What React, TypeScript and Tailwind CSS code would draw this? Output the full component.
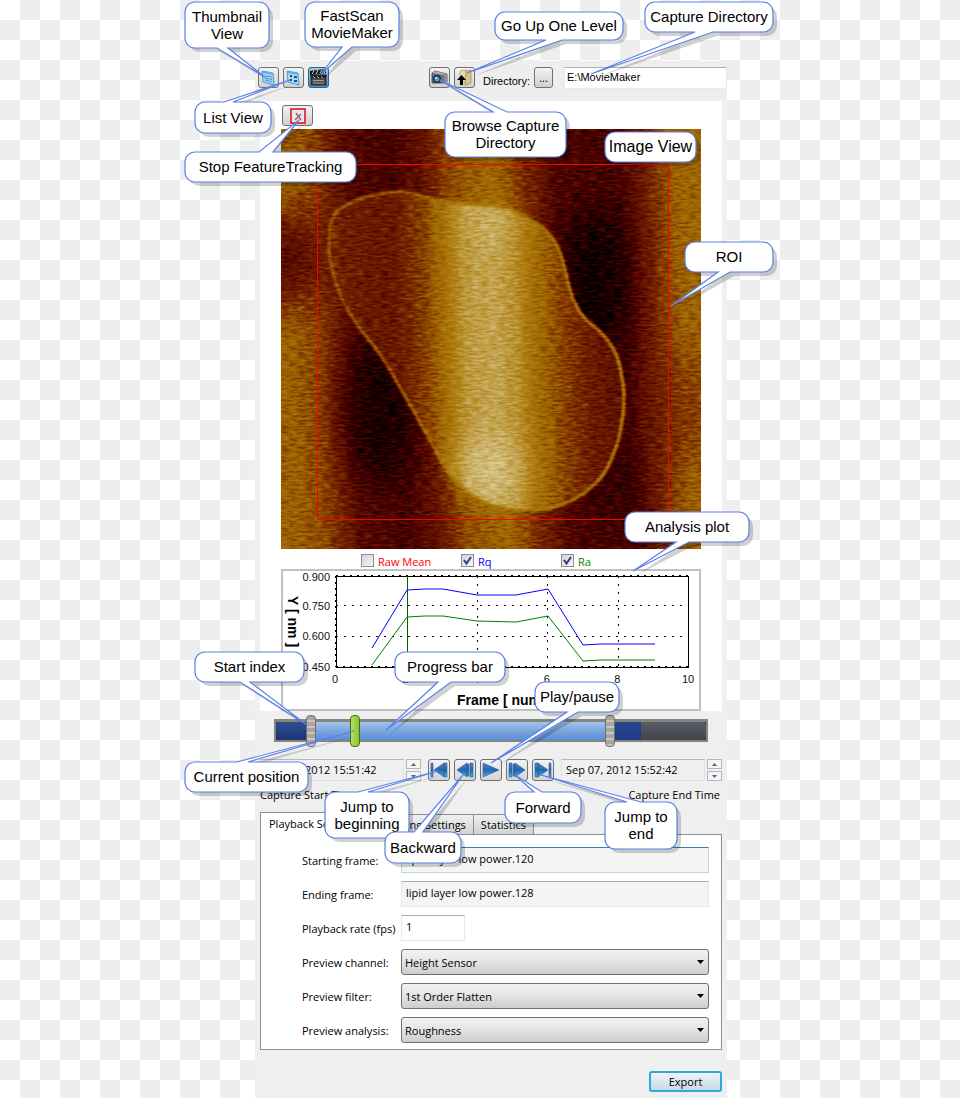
import React from "react";

type Point = [number, number];

type Callout = {
  lines: string[];
  x: number;
  y: number;
  w: number;
  h: number;
  large?: boolean;
  tail?: { side: "top" | "bottom"; from: number; to: number; tip: Point };
};

const callouts: Callout[] = [
  { lines: ["Thumbnail", "View"], x: 185, y: 2, w: 84, h: 46, tail: { side: "bottom", from: 217, to: 228, tip: [265, 77] } },
  { lines: ["FastScan", "MovieMaker"], x: 305, y: 2, w: 94, h: 45, tail: { side: "bottom", from: 342, to: 352, tip: [321, 74] } },
  { lines: ["Go Up One Level"], x: 495, y: 12, w: 128, h: 28, tail: { side: "bottom", from: 546, to: 562, tip: [467, 73] } },
  { lines: ["Capture Directory"], x: 645, y: 2, w: 128, h: 30, tail: { side: "bottom", from: 695, to: 713, tip: [591, 74] } },
  { lines: ["List View"], x: 195, y: 102, w: 76, h: 31, tail: { side: "top", from: 224, to: 233, tip: [290, 80] } },
  { lines: ["Browse Capture", "Directory"], x: 445, y: 112, w: 121, h: 45, tail: { side: "top", from: 493, to: 507, tip: [440, 80] } },
  { lines: ["Image View"], x: 605, y: 132, w: 91, h: 30, large: true },
  { lines: ["Stop FeatureTracking"], x: 185, y: 152, w: 171, h: 30, tail: { side: "top", from: 259, to: 273, tip: [299, 120] } },
  { lines: ["ROI"], x: 685, y: 242, w: 88, h: 30, tail: { side: "bottom", from: 718, to: 730, tip: [671, 306] } },
  { lines: ["Analysis plot"], x: 625, y: 512, w: 124, h: 30, tail: { side: "bottom", from: 676, to: 689, tip: [633, 571] } },
  { lines: ["Start index"], x: 195, y: 652, w: 109, h: 30, tail: { side: "bottom", from: 240, to: 250, tip: [307, 725] } },
  { lines: ["Progress bar"], x: 395, y: 652, w: 110, h: 30, tail: { side: "bottom", from: 438, to: 451, tip: [386, 730] } },
  { lines: ["Play/pause"], x: 535, y: 682, w: 84, h: 30, tail: { side: "bottom", from: 567, to: 578, tip: [491, 763] } },
  { lines: ["Current position"], x: 185, y: 762, w: 123, h: 30, tail: { side: "top", from: 237, to: 248, tip: [354, 731] } },
  { lines: ["Jump to", "beginning"], x: 325, y: 792, w: 84, h: 46, tail: { side: "top", from: 358, to: 368, tip: [438, 771] } },
  { lines: ["Backward"], x: 385, y: 832, w: 76, h: 31, tail: { side: "top", from: 414, to: 423, tip: [463, 775] } },
  { lines: ["Forward"], x: 505, y: 792, w: 76, h: 31, tail: { side: "top", from: 534, to: 542, tip: [515, 775] } },
  { lines: ["Jump to", "end"], x: 605, y: 802, w: 72, h: 47, tail: { side: "top", from: 627, to: 641, tip: [541, 775] } },
];

const calloutPath = ({ x, y, w, h, tail }: Callout) => {
  const r = 10;
  const top =
    tail?.side === "top" ? `H${tail.from} L${tail.tip.join(" ")} L${tail.to} ${y}` : "";
  const bottom =
    tail?.side === "bottom"
      ? `H${tail.to} L${tail.tip.join(" ")} L${tail.from} ${y + h}`
      : "";
  return [
    `M${x + r} ${y}`,
    top,
    `H${x + w - r} a${r} ${r} 0 0 1 ${r} ${r}`,
    `V${y + h - r} a${r} ${r} 0 0 1 -${r} ${r}`,
    bottom,
    `H${x + r} a${r} ${r} 0 0 1 -${r} -${r}`,
    `V${y + r} a${r} ${r} 0 0 1 ${r} -${r} Z`,
  ].join(" ");
};

const Callouts: React.FC = () => (
  <svg
    viewBox="180 0 600 870"
    width="600"
    height="870"
    className="pointer-events-none absolute -left-[75px] top-0 z-10 max-w-none font-['Liberation_Sans',sans-serif]"
  >
    {callouts.map((item) => {
      const d = calloutPath(item);
      const middle = item.y + item.h / 2 + 5;
      return (
        <g key={item.lines.join(" ")}>
          <path d={d} transform="translate(4 4)" fill="#000" fillOpacity="0.18" />
          <path d={d} fill="#fff" stroke="#5c80e6" strokeWidth="1.2" />
          <text textAnchor="middle" className={item.large ? "text-[16px]" : "text-[15px]"}>
            {item.lines.map((line, i) => (
              <tspan
                key={line}
                x={item.x + item.w / 2}
                y={Math.round(middle + (i - (item.lines.length - 1) / 2) * 17)}
              >
                {line}
              </tspan>
            ))}
          </text>
        </g>
      );
    })}
  </svg>
);

const blob: Point[] = [
  [49, 88], [66, 74], [88, 67], [109, 63], [129, 63], [149, 70], [176, 74], [219, 77],
  [242, 86], [269, 103], [281, 126], [286, 148], [291, 168], [302, 189], [322, 204],
  [336, 224], [342, 250], [344, 274], [339, 308], [331, 330], [322, 348], [302, 366],
  [276, 379], [246, 382], [219, 379], [192, 368], [166, 344], [149, 311], [122, 264],
  [99, 224], [69, 188], [54, 154], [47, 124],
];

// Closed curve that bends at each point and passes through the midpoints
const smoothPath = (points: Point[]) => {
  const mid = (a: Point, b: Point) => `${(a[0] + b[0]) / 2} ${(a[1] + b[1]) / 2}`;
  const start = mid(points[points.length - 1], points[0]);
  const curves = points.map(
    (p, i) => `Q${p[0]} ${p[1]} ${mid(p, points[(i + 1) % points.length])}`
  );
  return `M${start} ${curves.join(" ")} Z`;
};

const HeightImage: React.FC = () => (
  <svg viewBox="0 0 420 420" className="block w-full">
    <defs>
      <linearGradient id="ground" gradientUnits="userSpaceOnUse" x1="0" y1="0" x2="420" y2="-18">
        <stop offset="0" stopColor="#6a6a6a" />
        <stop offset="0.07" stopColor="#5a5a5a" />
        <stop offset="0.15" stopColor="#2e2e2e" />
        <stop offset="0.25" stopColor="#222" />
        <stop offset="0.33" stopColor="#363636" />
        <stop offset="0.4" stopColor="#5e5e5e" />
        <stop offset="0.5" stopColor="#707070" />
        <stop offset="0.58" stopColor="#484848" />
        <stop offset="0.65" stopColor="#282828" />
        <stop offset="0.8" stopColor="#222" />
        <stop offset="0.87" stopColor="#484848" />
        <stop offset="0.93" stopColor="#6a6a6a" />
        <stop offset="1" stopColor="#707070" />
      </linearGradient>
      <linearGradient id="layer" gradientUnits="userSpaceOnUse" x1="40" x2="350" y1="0" y2="-8">
        <stop offset="0" stopColor="#4c4c4c" />
        <stop offset="0.1" stopColor="#404040" />
        <stop offset="0.22" stopColor="#3c3c3c" />
        <stop offset="0.32" stopColor="#585858" />
        <stop offset="0.39" stopColor="#7c7c7c" />
        <stop offset="0.45" stopColor="#a2a2a2" />
        <stop offset="0.54" stopColor="#acacac" />
        <stop offset="0.61" stopColor="#9c9c9c" />
        <stop offset="0.67" stopColor="#787878" />
        <stop offset="0.76" stopColor="#5a5a5a" />
        <stop offset="0.86" stopColor="#3d3d3d" />
        <stop offset="1" stopColor="#343434" />
      </linearGradient>
      <linearGradient id="rim">
        <stop offset="0" stopColor="#686868" />
        <stop offset="0.4" stopColor="#747474" />
        <stop offset="1" stopColor="#848484" />
      </linearGradient>
      <filter id="soft" x="-50%" y="-50%" width="200%" height="200%">
        <feGaussianBlur stdDeviation="18" />
      </filter>
      <filter id="edge">
        <feGaussianBlur stdDeviation="0.8" />
      </filter>
      <filter id="scan" x="0" y="0" width="100%" height="100%" colorInterpolationFilters="sRGB">
        <feTurbulence type="fractalNoise" baseFrequency="0.12 0.45" numOctaves="2" seed="4" />
        <feColorMatrix values="1 0 0 0 0  1 0 0 0 0  1 0 0 0 0  0 0 0 0 1" result="noise" />
        <feComposite in="SourceGraphic" in2="noise" operator="arithmetic" k2="1" k3="0.28" k4="-0.14" />
        <feColorMatrix values="1 0 0 0 0  0 1 0 0 0  0 0 1 0 0  0 0 0 0 1" />
        <feComponentTransfer>
          <feFuncR type="table" tableValues="0 0.29 0.46 0.62 0.7 0.79 0.9 1" />
          <feFuncG type="table" tableValues="0 0 0.14 0.4 0.52 0.69 0.86 1" />
          <feFuncB type="table" tableValues="0 0 0 0 0.1 0.4 0.68 1" />
        </feComponentTransfer>
      </filter>
    </defs>
    <g filter="url(#scan)">
      <rect width="420" height="420" fill="url(#ground)" />
      <g filter="url(#soft)">
        <ellipse cx="98" cy="280" rx="36" ry="80" fill="#000" fillOpacity="0.7" />
        <ellipse cx="312" cy="155" rx="32" ry="80" fill="#000" fillOpacity="0.85" />
        <ellipse cx="330" cy="360" rx="24" ry="40" fill="#000" fillOpacity="0.35" />
        <ellipse cx="5" cy="130" rx="34" ry="46" fill="#1c1c1c" fillOpacity="0.8" />
        <ellipse cx="405" cy="280" rx="34" ry="60" fill="#333" fillOpacity="0.4" />
      </g>
      <path
        d={smoothPath(blob)}
        fill="url(#layer)"
        stroke="url(#rim)"
        strokeWidth="3"
        filter="url(#edge)"
      />
      <g filter="url(#soft)">
        <ellipse cx="208" cy="340" rx="34" ry="26" fill="#eee" fillOpacity="0.45" />
        <ellipse cx="212" cy="92" rx="28" ry="12" fill="#eee" fillOpacity="0.3" />
      </g>
    </g>
    <path d="M36.5 35.5H387.5V390.5H36.5Z" fill="none" stroke="#f00" />
  </svg>
);

const rq = "89,77 124,19 142,18 160,18 194,24 233,24 265,18 300,74 318,73 372,73";
const ra = "89,94 124,46 142,45 160,45 194,50 233,51 265,45 300,90 318,89 372,89";

const AnalysisPlot: React.FC = () => (
  <div className="border-2 border-[#c0c0c0] bg-white">
    <svg
      viewBox="0 0 416 138"
      className="block w-full font-['Liberation_Sans',sans-serif] text-[11px]"
    >
      <g stroke="#000" strokeDasharray="2 6" fill="none" shapeRendering="crispEdges">
        <path d="M53 34.5H405M53 65.5H405M194.5 5V96M264.5 5V96M335.5 5V96" />
        <path d="M53 4.5H405M53 95.5H405" strokeDasharray="2 5" strokeWidth="2" />
        <path d="M52.5 5V96" strokeDasharray="2 4" strokeWidth="2" />
      </g>
      <rect x="53.5" y="5.5" width="352" height="91" fill="none" stroke="#000" />
      <path d="M124.5 5V96" stroke="#006000" />
      <polyline points={rq} fill="none" stroke="#00f" />
      <polyline points={ra} fill="none" stroke="#008000" />
      <g textAnchor="end" fill="#111">
        <text x="47" y="10">0.900</text>
        <text x="47" y="39">0.750</text>
        <text x="47" y="69">0.600</text>
        <text x="47" y="100">0.450</text>
      </g>
      <g textAnchor="middle" fill="#111">
        {[0, 2, 4, 6, 8, 10].map((n) => (
          <text key={n} x={52 + n * 35.3} y="112">
            {n}
          </text>
        ))}
      </g>
      <g className="text-[14px] font-bold">
        <text x="174" y="134">Frame [ num ]</text>
        <text transform="translate(5 25) rotate(90)">Y [ nm ]</text>
      </g>
    </svg>
  </div>
);

const ToolButton: React.FC<{
  label: string;
  active?: boolean;
  className?: string;
  children: React.ReactNode;
}> = ({ label, active, className = "w-[21px]", children }) => (
  <button
    aria-label={label}
    className={`flex h-[21px] items-center justify-center rounded-[3px] border ${
      active
        ? "border-[#2c628b] bg-linear-to-b from-[#9cc7e4] to-[#4d8fbf]"
        : "border-[#707070] bg-linear-to-b from-[#f3f3f3] to-[#d0d0d0]"
    } ${className}`}
  >
    {children}
  </button>
);

const WindowIcon: React.FC<{ grid?: boolean }> = ({ grid }) => (
  <svg viewBox="0 0 17 17" className="size-[17px]">
    <path d="M2 2 L13 4 L14 16 L3 13 Z" fill="#a9d8f5" stroke="#4a9fd4" />
    <path d="M2 2 L13 4 V6 L2 4 Z" fill="#5bb3e8" />
    {grid ? (
      <g fill="#1e4f7d">
        <rect x="5" y="6" width="2" height="2" />
        <rect x="9" y="7" width="3" height="2" />
        <rect x="5" y="10" width="2" height="2" />
        <rect x="9" y="11" width="3" height="2" />
      </g>
    ) : (
      <path d="M5 7 L12 8 M5 9 L12 10.5 M5 11 L12 13" stroke="#3f86bd" strokeWidth="0.9" />
    )}
  </svg>
);

const ClapperIcon: React.FC = () => (
  <svg viewBox="0 0 19 19" className="size-[19px]">
    <path d="M1 3 L17 1 V5 L1 7 Z" fill="#111" />
    <path d="M3 6 L5 3 M7 6 L9 2 M11 5 L13 2 M15 5 L17 2" stroke="#ddd" />
    <rect x="2" y="7" width="15" height="10" fill="#4a4a4a" stroke="#222" />
    <path d="M2 8.5H17" stroke="#111" strokeWidth="2" />
    <path d="M4 8 L6 10 M8 8 L10 10 M12 8 L14 10" stroke="#ccc" strokeWidth="0.8" />
    <path d="M4 12.5H15M4 15H15" stroke="#b8b8b8" strokeWidth="0.8" />
  </svg>
);

const CameraIcon: React.FC = () => (
  <svg viewBox="0 0 19 19" className="size-[19px]">
    <path d="M2 5 L5 3 L17 6 V14 L14 15 L2 15 Z" fill="#6b6f75" stroke="#3c3f44" strokeWidth="0.8" />
    <path d="M5 3 L17 6 L14 7 L2 5 Z" fill="#a9adb3" />
    <path d="M14 7 L17 6 V14 L14 15 Z" fill="#8c9096" />
    <circle cx="7" cy="11" r="4" fill="#23272d" />
    <circle cx="7" cy="11" r="2.6" fill="#3d9fe0" />
    <circle cx="6" cy="10" r="1" fill="#d6f0ff" />
  </svg>
);

const FolderUpIcon: React.FC = () => (
  <svg viewBox="0 0 19 19" className="size-[19px]">
    <path d="M5 3 L11 2 V14 L5 16 Z" fill="#e9dca8" stroke="#b8a468" strokeWidth="0.8" />
    <path d="M11 3 L16 2 V15 L10 17 Z" fill="#d8c787" stroke="#a8935a" strokeWidth="0.8" />
    <path d="M6.500 7 L11 12 H8 V17 H5 V12 H2 Z" fill="#000" />
  </svg>
);

const StopTrackingIcon: React.FC = () => (
  <svg viewBox="0 0 16 16" className="size-[16px]">
    <rect x="1" y="1" width="14" height="14" fill="#dcebf5" stroke="#e8141c" strokeWidth="1.6" />
    <path d="M6 5 L11 12 M11 6 L5 12" stroke="#c0503a" strokeWidth="1.4" />
  </svg>
);

const Toolbar: React.FC = () => (
  <header className="flex h-10 items-start bg-[#eee] pt-[6px] pl-[3px] text-[11px]">
    <div className="flex gap-1">
      <ToolButton label="Thumbnail view">
        <WindowIcon />
      </ToolButton>
      <ToolButton label="List view">
        <WindowIcon grid />
      </ToolButton>
      <ToolButton label="FastScan MovieMaker" active>
        <ClapperIcon />
      </ToolButton>
    </div>
    <div className="ml-auto flex gap-1">
      <ToolButton label="Browse capture directory">
        <CameraIcon />
      </ToolButton>
      <ToolButton label="Go up one level">
        <FolderUpIcon />
      </ToolButton>
    </div>
    <label
      htmlFor="directory"
      className="ml-2 w-[51px] pt-[6px] font-['Liberation_Sans',sans-serif] leading-4"
    >
      Directory:
    </label>
    <ToolButton label="Choose directory" className="w-[19px]">
      <span className="leading-3">...</span>
    </ToolButton>
    <input
      id="directory"
      defaultValue="E:\MovieMaker"
      className="ml-[11px] h-[22px] w-[163px] border border-[#e3e9ef] border-t-[#abadb3] bg-white px-[2px] pb-[3px] font-['Liberation_Sans',sans-serif]"
    />
  </header>
);

const series = [
  { name: "Raw Mean", color: "text-[#ff0000]", checked: false },
  { name: "Rq", color: "text-[#0000ff]", checked: true },
  { name: "Ra", color: "text-[#008000]", checked: true },
];

const SeriesToggles: React.FC = () => (
  <div className="flex h-5 pt-[5px] pl-20">
    {series.map(({ name, color, checked }) => (
      <label key={name} className={`flex w-[100px] items-start gap-1 ${color}`}>
        <span className="relative size-[13px]">
          <input
            type="checkbox"
            defaultChecked={checked}
            className="peer block size-[13px] appearance-none border border-[#8e8f8f] bg-linear-to-br from-[#cfd3d8] to-[#f6f6f6]"
          />
          <svg
            viewBox="0 0 13 13"
            className="pointer-events-none absolute inset-0 hidden peer-checked:block"
          >
            <path d="M3 6 L5.500 9.500 L10 3" fill="none" stroke="#2f3c86" strokeWidth="2" />
          </svg>
        </span>
        <span className="leading-[15px]">{name}</span>
      </label>
    ))}
  </div>
);

const rangeClass =
  "pointer-events-none absolute inset-x-0 -top-1 h-8 w-full appearance-none bg-transparent [&::-webkit-slider-thumb]:pointer-events-auto [&::-webkit-slider-thumb]:h-8 [&::-webkit-slider-thumb]:w-[10px] [&::-webkit-slider-thumb]:appearance-none [&::-webkit-slider-thumb]:rounded-[4px] [&::-webkit-slider-thumb]:border";
const grayThumb =
  "[&::-webkit-slider-thumb]:border-[#6f6d68] [&::-webkit-slider-thumb]:bg-[repeating-linear-gradient(#aaa69f_0_4px,#c9c6c0_4px_6px)]";
const greenThumb =
  "[&::-webkit-slider-thumb]:border-[#4a6b12] [&::-webkit-slider-thumb]:bg-[linear-gradient(90deg,#b4de62,#8cc234)]";

const Timeline: React.FC = () => (
  <div className="relative mx-[19px] h-[23px]">
    <div className="flex h-full border-2 border-t-[3px] border-[#85857f] bg-[#33353c]">
      <div className="w-[7%] rounded-l-sm bg-linear-to-b from-[#2f4f96] to-[#1c3572]" />
      <div className="w-[70%] bg-linear-to-b from-[#a3c3ec] via-[#79a5de] to-[#5a8fd6]" />
      <div className="w-[8%] bg-linear-to-b from-[#26458f] to-[#1f3d84]" />
      <div className="grow rounded-r-sm bg-linear-to-b from-[#5a5c69] to-[#42434a]" />
    </div>
    <input type="range" aria-label="Start index" min="0" max="424" defaultValue="32" className={`${rangeClass} ${grayThumb}`} />
    <input type="range" aria-label="End index" min="0" max="424" defaultValue="331" className={`${rangeClass} ${grayThumb}`} />
    <input type="range" aria-label="Current position" min="0" max="424" defaultValue="76" className={`${rangeClass} ${greenThumb}`} />
  </div>
);

const TimeField: React.FC<{ id: string; value: string }> = ({ id, value }) => (
  <div className="flex gap-[2px]">
    <input
      id={id}
      readOnly
      value={value}
      className="h-[22px] w-[144px] border border-[#dfe3e8] border-t-[#b4b6ba] bg-[#f0f0f0] px-1 pb-[2px]"
    />
    <div className="flex w-[15px] flex-col gap-[2px]">
      <button
        aria-label="Later"
        className="flex h-[10px] items-center justify-center border border-[#b4b6ba] bg-[#f4f4f4]"
      >
        <svg viewBox="0 0 5 3" className="h-[3px] w-[5px]">
          <path d="M0 3 L2.500 0 L5 3 Z" fill="#4a5f97" />
        </svg>
      </button>
      <button
        aria-label="Earlier"
        className="flex h-[10px] items-center justify-center border border-[#b4b6ba] bg-[#f4f4f4]"
      >
        <svg viewBox="0 0 5 3" className="h-[3px] w-[5px]">
          <path d="M0 0 L2.500 3 L5 0 Z" fill="#4a5f97" />
        </svg>
      </button>
    </div>
  </div>
);

const playerButtons = [
  { label: "Jump to beginning", d: "M2 3H4V17H2Z M15 3V17L5 10Z M15 3H18V17H15Z" },
  { label: "Backward", d: "M12 3V17L2 10Z M12 4H14V16H12Z M15 3H18V17H15Z" },
  { label: "Play/pause", d: "M2 3L18 10L2 17Z" },
  { label: "Forward", d: "M2 3H5V17H2Z M6 4H8V16H6Z M8 3L18 10L8 17Z" },
  { label: "Jump to end", d: "M2 3H5V17H2Z M5 3L15 10L5 17Z M16 3H18V17H16Z" },
];

const Player: React.FC = () => (
  <div className="flex gap-1">
    <svg className="absolute size-0">
      <linearGradient id="player-blue" x1="0" x2="0" y1="0" y2="1">
        <stop offset="0" stopColor="#5a86c4" />
        <stop offset="0.5" stopColor="#1f67ae" />
        <stop offset="1" stopColor="#45b4f0" />
      </linearGradient>
    </svg>
    {playerButtons.map(({ label, d }) => (
      <button
        key={label}
        aria-label={label}
        className="size-[22px] rounded-[3px] border border-[#707070] bg-linear-to-b from-[#f3f3f3] to-[#d4d4d4]"
      >
        <svg viewBox="0 0 20 20" className="block size-full">
          <path d={d} fill="url(#player-blue)" stroke="#2a5a98" strokeWidth="0.6" />
        </svg>
      </button>
    ))}
  </div>
);

const tabs = ["Playback Settings", "Tracking Settings", "Statistics"];

const fieldClass =
  "h-[26px] border px-1 pb-[3px] border-[#e3e9ef] border-t-[#abadb3]";

const Row: React.FC<{ id: string; label: string; children: React.ReactNode }> = ({
  id,
  label,
  children,
}) => (
  <div className="flex h-[26px] items-center">
    <label htmlFor={id} className="mr-[5px] w-[94px] shrink-0 overflow-hidden pt-[2px] whitespace-nowrap">
      {label}
    </label>
    {children}
  </div>
);

const Select: React.FC<{ id: string; value: string }> = ({ id, value }) => (
  <div className="relative grow">
    <select
      id={id}
      className="block h-[26px] w-full appearance-none rounded-[3px] border border-[#707070] bg-linear-to-b from-[#f2f2f2] via-[#e4e4e4] to-[#cdcdcd] px-[3px] pt-[2px]"
    >
      <option>{value}</option>
    </select>
    <svg
      viewBox="0 0 7 4"
      className="pointer-events-none absolute top-[11px] right-[5px] h-1 w-[7px]"
    >
      <path d="M0 0H7L3.500 4Z" />
    </svg>
  </div>
);

const Settings: React.FC = () => (
  <section className="mt-[9px]">
    <div role="tablist" className="flex h-[22px] items-end">
      {tabs.map((tab, i) => (
        <button
          key={tab}
          role="tab"
          aria-selected={i === 0}
          className={
            i === 0
              ? "relative -mb-px h-[23px] w-[112px] border border-b-0 border-[#8c8e94] bg-white px-2 text-left"
              : "h-5 border border-b-0 border-l-0 border-[#8c8e94] bg-linear-to-b from-[#f0f0f0] to-[#d2d2d2] px-[7px] pt-[2px]"
          }
        >
          {tab}
        </button>
      ))}
    </div>
    <div className="flex flex-col gap-2 border border-[#8c8e94] bg-white pt-3 pr-3 pb-[6px] pl-[41px]">
      <Row id="starting" label="Starting frame:">
        <input
          id="starting"
          readOnly
          value="lipid layer low power.120"
          className="h-[26px] min-w-0 grow border border-[#b5d8ea] border-t-[#3d7bad] bg-[#f4f4f4] px-1 pb-[3px]"
        />
      </Row>
      <Row id="ending" label="Ending frame:">
        <input
          id="ending"
          readOnly
          value="lipid layer low power.128"
          className={`${fieldClass} min-w-0 grow bg-[#f4f4f4]`}
        />
      </Row>
      <Row id="rate" label="Playback rate (fps):">
        <input id="rate" defaultValue="1" className={`${fieldClass} w-16 bg-white`} />
      </Row>
      <Row id="channel" label="Preview channel:">
        <Select id="channel" value="Height Sensor" />
      </Row>
      <Row id="filter" label="Preview filter:">
        <Select id="filter" value="1st Order Flatten" />
      </Row>
      <Row id="analysis" label="Preview analysis:">
        <Select id="analysis" value="Roughness" />
      </Row>
    </div>
  </section>
);

const App: React.FC = () => (
  <div className="flex min-h-screen justify-center overflow-hidden bg-[repeating-conic-gradient(#eeeeee_0_25%,#ffffff_0_50%)] bg-size-[40px_40px] pl-[22px] font-['Open_Sans',sans-serif] text-[11px] text-black">
    <main className="relative w-full max-w-[472px] pt-[61px]">
      <Toolbar />
      <section className="border-x-[5px] border-[#f0f0f0] bg-white px-[21px]">
        <div className="h-7 pt-1 pl-px">
          <ToolButton label="Stop feature tracking" className="w-[31px]">
            <StopTrackingIcon />
          </ToolButton>
        </div>
        <HeightImage />
        <SeriesToggles />
        <AnalysisPlot />
      </section>
      <section className="bg-[#efefef] pt-2 pb-[6px]">
        <Timeline />
        <div className="pr-[5px] pl-[5px]">
          <div className="mt-[17px] flex justify-between">
            <TimeField id="start-time" value="Sep 07, 2012 15:51:42" />
            <Player />
            <TimeField id="end-time" value="Sep 07, 2012 15:52:42" />
          </div>
          <div className="mt-[6px] flex justify-between pr-[2px] leading-4">
            <label htmlFor="start-time">Capture Start Time</label>
            <label htmlFor="end-time">Capture End Time</label>
          </div>
          <Settings />
          <div className="mt-[21px] flex justify-end">
            <button className="h-[21px] w-[73px] rounded-[3px] border-2 border-[#2fa8dc] bg-linear-to-b from-[#eef4f8] to-[#c8d9e6] leading-4">
              Export
            </button>
          </div>
        </div>
      </section>
      <Callouts />
    </main>
  </div>
);

export default App;
